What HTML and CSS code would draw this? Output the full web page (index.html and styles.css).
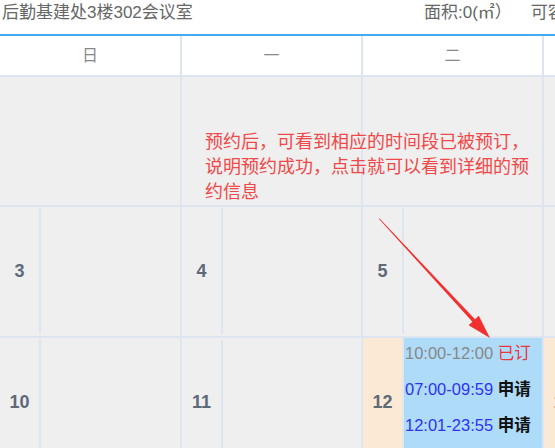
FILE: index.html
```html
<!DOCTYPE html>
<html>
	<head>
		<meta charset="utf-8">
		<title>会议室预约</title>
		<link rel="stylesheet" href="styles.css">
	</head>
	<body>
		<!-- 会议室信息 -->
		<div class="room-bar">
			<span class="room-name">后勤基建处3楼302会议室</span>
			<span class="room-area">面积:0(㎡）</span>
			<span class="room-cap">可容纳人数:20</span>
		</div>
		<!-- 日历 -->
		<div class="calendar">
			<div class="head">日</div>
			<div class="head">一</div>
			<div class="head">二</div>
			<div class="head">三</div>
			<div class="head">四</div>
			<div class="head">五</div>
			<div class="head">六</div>

			<div class="cell"></div>
			<div class="cell"></div>
			<div class="cell"></div>
			<div class="cell"></div>
			<div class="cell"></div>
			<div class="cell"></div>
			<div class="cell"></div>

			<div class="cell day"><div class="num">3</div><div class="split"></div><div class="slots"></div></div>
			<div class="cell day"><div class="num">4</div><div class="split"></div><div class="slots"></div></div>
			<div class="cell day"><div class="num">5</div><div class="split"></div><div class="slots"></div></div>
			<div class="cell day"><div class="num">6</div><div class="split"></div><div class="slots"></div></div>
			<div class="cell day"><div class="num">7</div><div class="split"></div><div class="slots"></div></div>
			<div class="cell day"><div class="num">8</div><div class="split"></div><div class="slots"></div></div>
			<div class="cell day"><div class="num">9</div><div class="split"></div><div class="slots"></div></div>

			<div class="cell day"><div class="num">10</div><div class="split"></div><div class="slots"></div></div>
			<div class="cell day"><div class="num">11</div><div class="split"></div><div class="slots"></div></div>
			<div class="cell day open">
				<div class="num">12</div><div class="split"></div>
				<div class="slots">
					<div class="slot"><span class="time booked">10:00-12:00</span> <span class="done">已订</span></div>
					<div class="slot"><span class="time">07:00-09:59</span> <span class="apply">申请</span></div>
					<div class="slot"><span class="time">12:01-23:55</span> <span class="apply">申请</span></div>
				</div>
			</div>
			<div class="cell day open"><div class="num">13</div><div class="split"></div><div class="slots"></div></div>
			<div class="cell day open"><div class="num">14</div><div class="split"></div><div class="slots"></div></div>
			<div class="cell day open"><div class="num">15</div><div class="split"></div><div class="slots"></div></div>
			<div class="cell day"><div class="num">16</div><div class="split"></div><div class="slots"></div></div>
		</div>

		<!-- 说明标注 -->
		<div class="note">预约后，可看到相应的时间段已被预订，说明预约成功，点击就可以看到详细的预约信息</div>
		<svg class="arrow" width="555" height="448" viewBox="0 0 555 448">
			<polygon fill="#f2302f" points="379,219 379.6,218.6 475,319.3 478.8,315.7 490,338 468.6,325.3 472.4,321.7"/>
		</svg>
	</body>
</html>
```

FILE: styles.css
```css
html, body{
	margin: 0;
	overflow: hidden;
	background: #fff;
	font-family: "Liberation Sans", "Noto Sans CJK SC", sans-serif;
}
.room-bar{
	display: flex;
	height: 34px;
	line-height: 25px;
	font-size: 17px;
	color: #666;
	white-space: nowrap;
	width: 1300px;
}
.room-name{
	width: 422px;
	padding-left: 2px;
}
.room-area{
	margin-right: 19px;
}
.calendar{
	display: grid;
	grid-template-columns: 180px repeat(6, 179px);
	grid-template-rows: 39px 128px 129px 128px;
	gap: 2px;
	background: #dce5f0;
	border-top: 2px solid #45a9ef;
	width: max-content;
}
.head{
	background: #fff;
	text-align: center;
	line-height: 39px;
	font-size: 16px;
	color: #888;
}
.cell{
	background: #efefef;
}
.day{
	display: flex;
}
.num{
	width: 39px;
	display: flex;
	align-items: center;
	justify-content: center;
	font-size: 18px;
	font-weight: bold;
	color: #5f6a78;
}
.split{
	width: 2px;
	margin: 1px 0 2px;
	background: #dce5f0;
}
.slots{
	flex: 1;
	padding-left: 1px;
	font-size: 16.5px;
}
.open .num{
	background: #fbe9d5;
}
.open .split{
	margin: 0;
	background: #dfe8f1;
}
.open .slots{
	background: #aedbf8;
}
.slot{
	line-height: 30px;
	margin-bottom: 6px;
	white-space: nowrap;
}
.time{
	color: #2f33f0;
}
.time.booked{
	color: #888;
}
.done{
	color: #e8383d;
}
.apply{
	color: #111;
	font-weight: bold;
}
.note{
	position: absolute;
	left: 205px;
	top: 128px;
	width: 330px;
	font-size: 18px;
	line-height: 25px;
	color: #f04848;
	font-family: "Noto Sans CJK SC", sans-serif;
}
.arrow{
	position: absolute;
	left: 0;
	top: 0;
}
```
